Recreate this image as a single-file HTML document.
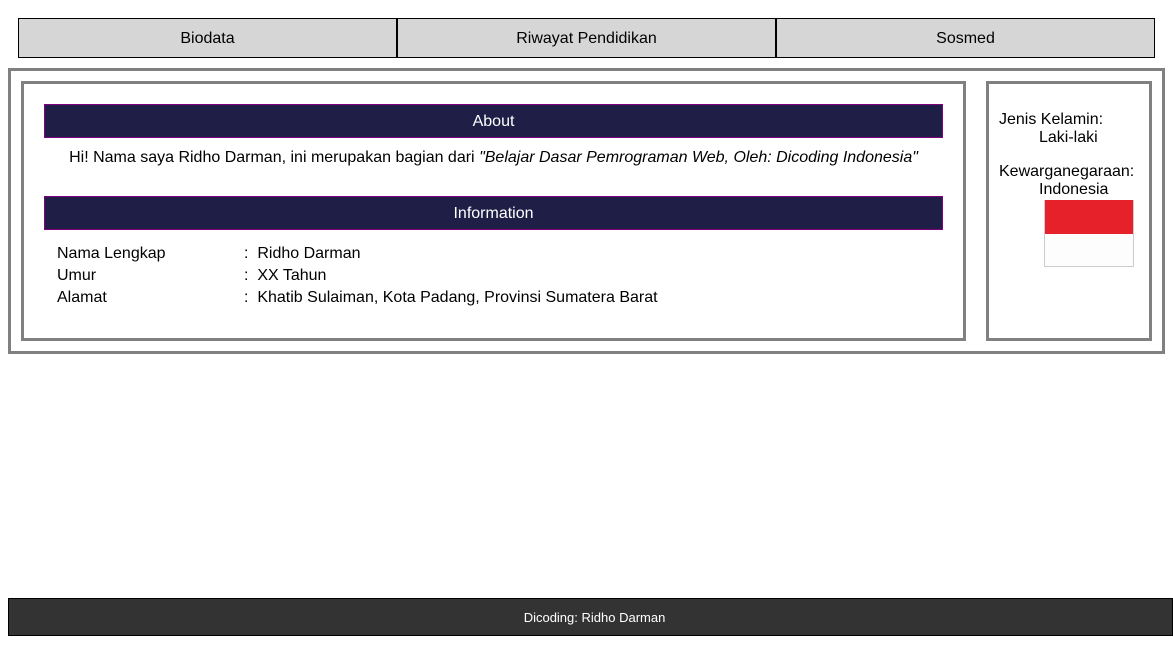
<!DOCTYPE html>
<html><head><style>
*{box-sizing:border-box;margin:0;padding:0}
body{width:1173px;height:653px;background:#fff;font-family:"Liberation Sans",Arial,sans-serif;font-size:16px;color:#000;position:relative;overflow:hidden}
.a{position:absolute}
.nav{left:18px;top:18px;width:1137px;height:40px;display:flex;border:1px solid #000;background:#d6d6d6}
.nav div{flex:1;text-align:center;line-height:40px;border-right:2px solid #000}
.nav div:last-child{border-right:none}
.box{border:3px solid #808080}
.bar{background:#1e1e46;border:1px solid #800080;color:#fff;text-align:center;line-height:34px;height:34px}
</style></head><body>
<div class="a nav"><div>Biodata</div><div>Riwayat Pendidikan</div><div>Sosmed</div></div>
<div class="a box" style="left:8px;top:68px;width:1157px;height:286px"></div>
<div class="a box" style="left:21px;top:81px;width:945px;height:260px"></div>
<div class="a box" style="left:986px;top:81px;width:166px;height:260px"></div>
<div class="a bar" style="left:44px;top:104px;width:899px">About</div>
<div class="a" style="left:44px;top:149px;width:899px;text-align:center">Hi! Nama saya Ridho Darman, ini merupakan bagian dari <i>"Belajar Dasar Pemrograman Web, Oleh: Dicoding Indonesia"</i></div>
<div class="a bar" style="left:44px;top:196px;width:899px">Information</div>
<div class="a" style="left:57px;top:243px;line-height:22px">Nama Lengkap<br>Umur<br>Alamat</div>
<div class="a" style="left:244px;top:243px;line-height:22px">:&nbsp; Ridho Darman<br>:&nbsp; XX Tahun<br>:&nbsp; Khatib Sulaiman, Kota Padang, Provinsi Sumatera Barat</div>
<div class="a" style="left:999px;top:111px;line-height:18px">Jenis Kelamin:<br><span style="padding-left:40px">Laki-laki</span></div>
<div class="a" style="left:999px;top:163px;line-height:18px">Kewarganegaraan:<br><span style="padding-left:40px">Indonesia</span></div>
<div class="a" style="left:1044px;top:200px;width:90px;height:67px;border:1px solid #ccc;border-top:none;background:linear-gradient(#e6212a 0,#e6212a 34px,#fdfdfd 34px)"></div>
<div class="a" style="left:8px;top:598px;width:1165px;height:38px;background:#333;border:1px solid #000;color:#fff;text-align:center;font-size:13px;line-height:38px;padding-left:8px">Dicoding: Ridho Darman</div>
</body></html>
